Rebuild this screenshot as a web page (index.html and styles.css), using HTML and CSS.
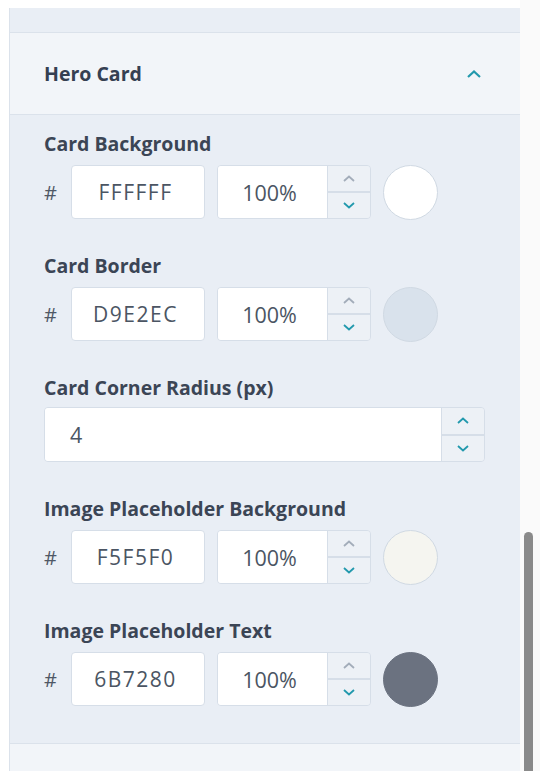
FILE: index.html
```html
<!DOCTYPE html>
<html>
  <head>
    <title>Theme Settings</title>
    <link rel="stylesheet" href="styles.css">
  </head>
  <body>
    <div class="layout">
      <div class="panel">
        <div class="top-band"></div>

        <div class="section-header">
          <span class="section-title">Hero Card</span>
          <svg class="chevron" width="16" height="10" viewBox="0 0 16 10">
            <path d="M2 8 L8 2.5 L14 8" fill="none" stroke="#2299ad" stroke-width="2.2"/>
          </svg>
        </div>

        <div class="section-body">
          <div class="field">
            <label>Card Background</label>
            <div class="color-row">
              <span class="hash">#</span>
              <div class="hex-input">FFFFFF</div>
              <div class="num-input">
                <span class="num-value">100%</span>
                <div class="stepper">
                  <span class="step up disabled"><svg width="14" height="9" viewBox="0 0 14 9"><path d="M2 7 L7 2.5 L12 7" fill="none" stroke="currentColor" stroke-width="1.8"/></svg></span>
                  <span class="step down"><svg width="14" height="9" viewBox="0 0 14 9"><path d="M2 2 L7 6.5 L12 2" fill="none" stroke="currentColor" stroke-width="1.8"/></svg></span>
                </div>
              </div>
              <span class="swatch" style="background: #FFFFFF"></span>
            </div>
          </div>

          <div class="field">
            <label>Card Border</label>
            <div class="color-row">
              <span class="hash">#</span>
              <div class="hex-input">D9E2EC</div>
              <div class="num-input">
                <span class="num-value">100%</span>
                <div class="stepper">
                  <span class="step up disabled"><svg width="14" height="9" viewBox="0 0 14 9"><path d="M2 7 L7 2.5 L12 7" fill="none" stroke="currentColor" stroke-width="1.8"/></svg></span>
                  <span class="step down"><svg width="14" height="9" viewBox="0 0 14 9"><path d="M2 2 L7 6.5 L12 2" fill="none" stroke="currentColor" stroke-width="1.8"/></svg></span>
                </div>
              </div>
              <span class="swatch" style="background: #D9E2EC"></span>
            </div>
          </div>

          <div class="field field-number">
            <label>Card Corner Radius (px)</label>
            <div class="num-input wide">
              <span class="num-value left">4</span>
              <div class="stepper">
                <span class="step up"><svg width="14" height="9" viewBox="0 0 14 9"><path d="M2 7 L7 2.5 L12 7" fill="none" stroke="currentColor" stroke-width="1.8"/></svg></span>
                <span class="step down"><svg width="14" height="9" viewBox="0 0 14 9"><path d="M2 2 L7 6.5 L12 2" fill="none" stroke="currentColor" stroke-width="1.8"/></svg></span>
              </div>
            </div>
          </div>

          <div class="field">
            <label>Image Placeholder Background</label>
            <div class="color-row">
              <span class="hash">#</span>
              <div class="hex-input">F5F5F0</div>
              <div class="num-input">
                <span class="num-value">100%</span>
                <div class="stepper">
                  <span class="step up disabled"><svg width="14" height="9" viewBox="0 0 14 9"><path d="M2 7 L7 2.5 L12 7" fill="none" stroke="currentColor" stroke-width="1.8"/></svg></span>
                  <span class="step down"><svg width="14" height="9" viewBox="0 0 14 9"><path d="M2 2 L7 6.5 L12 2" fill="none" stroke="currentColor" stroke-width="1.8"/></svg></span>
                </div>
              </div>
              <span class="swatch" style="background: #F5F5F0"></span>
            </div>
          </div>

          <div class="field">
            <label>Image Placeholder Text</label>
            <div class="color-row">
              <span class="hash">#</span>
              <div class="hex-input">6B7280</div>
              <div class="num-input">
                <span class="num-value">100%</span>
                <div class="stepper">
                  <span class="step up disabled"><svg width="14" height="9" viewBox="0 0 14 9"><path d="M2 7 L7 2.5 L12 7" fill="none" stroke="currentColor" stroke-width="1.8"/></svg></span>
                  <span class="step down"><svg width="14" height="9" viewBox="0 0 14 9"><path d="M2 2 L7 6.5 L12 2" fill="none" stroke="currentColor" stroke-width="1.8"/></svg></span>
                </div>
              </div>
              <span class="swatch dark" style="background: #6B7280"></span>
            </div>
          </div>
        </div>

        <div class="section-next"></div>
      </div>

      <div class="scroll-track">
        <div class="scroll-thumb"></div>
      </div>
    </div>
  </body>
</html>
```

FILE: styles.css
```css
html, body {
  margin: 0;
  padding: 0;
  height: 771px;
  overflow: hidden;
  background: #ffffff;
  font-family: "Open Sans", "Noto Sans", Arial, sans-serif;
  color: #3b4555;
}
.layout {
  display: flex;
  height: 771px;
  padding-left: 9px;
  padding-top: 8px;
  box-sizing: border-box;
}
.panel {
  width: 511px;
  display: flex;
  flex-direction: column;
  border-left: 1px solid #dbe2eb;
  box-sizing: border-box;
  background: #e9eef5;
}
.top-band {
  flex-shrink: 0;
  height: 24px;
  border-bottom: 1px solid #dbe2eb;
}
.section-header {
  flex-shrink: 0;
  height: 82px;
  background: #f2f5f9;
  border-bottom: 1px solid #dbe2eb;
  display: flex;
  align-items: center;
  justify-content: space-between;
  padding: 0 38px 0 34px;
  box-sizing: border-box;
}
.section-title {
  font-size: 19.5px;
  font-weight: 700;
  color: #354052;
}
.section-body {
  padding: 18px 0 0 34px;
  flex: 1;
  min-height: 0;
  overflow: hidden;
}
.field {
  margin-bottom: 36px;
}
.field label {
  display: block;
  font-size: 19.5px;
  line-height: 22px;
  font-weight: 700;
  color: #3b4555;
  margin-bottom: 10px;
}
.field-number {
  margin-bottom: 36px;
}
.field-number label {
  margin-bottom: 8px;
}
.color-row {
  display: flex;
  align-items: center;
  height: 54px;
}
.hash {
  width: 27px;
  font-size: 20px;
  color: #4f5866;
}
.hex-input {
  width: 134px;
  height: 54px;
  box-sizing: border-box;
  background: #ffffff;
  border: 1px solid #d6dee8;
  border-radius: 4px;
  display: flex;
  align-items: center;
  justify-content: center;
  font-size: 21px;
  letter-spacing: 1.5px;
  color: #4b5563;
  padding-right: 5px;
}
.num-input {
  margin-left: 12px;
  width: 154px;
  height: 54px;
  box-sizing: border-box;
  border: 1px solid #d6dee8;
  border-radius: 4px;
  display: flex;
  overflow: hidden;
}
.num-input.wide {
  margin-left: 0;
  width: 441px;
  height: 55px;
}
.num-value {
  flex: 1;
  background: #ffffff;
  border-right: 1px solid #d6dee8;
  display: flex;
  align-items: center;
  justify-content: center;
  font-size: 21.5px;
  color: #4b5563;
  padding-right: 6px;
}
.num-value.left {
  justify-content: flex-start;
  padding-left: 25px;
}
.stepper {
  width: 42px;
  display: flex;
  flex-direction: column;
  background: #edf1f6;
}
.step {
  flex: 1;
  display: flex;
  align-items: center;
  justify-content: center;
  color: #2299ad;
}
.step.up {
  border-bottom: 2px solid #d6dee8;
}
.step.disabled {
  color: #a3adba;
}
.swatch {
  flex-shrink: 0;
  margin-left: 12px;
  width: 55px;
  height: 55px;
  border-radius: 50%;
  border: 1px solid #d0d9e3;
  box-sizing: border-box;
}
.swatch.dark {
  border-color: #6b7280;
}
.section-next {
  flex-shrink: 0;
  height: 28px;
  background: #f2f5f9;
  border-top: 1px solid #dbe2eb;
  box-sizing: border-box;
}
.scroll-track {
  flex: 1;
  background: #fafafa;
  padding: 532px 0 0 4px;
  margin-top: -8px;
}
.scroll-thumb {
  width: 9px;
  height: 260px;
  background: #8a8a8a;
  border-radius: 5px 5px 0 0;
}
```
